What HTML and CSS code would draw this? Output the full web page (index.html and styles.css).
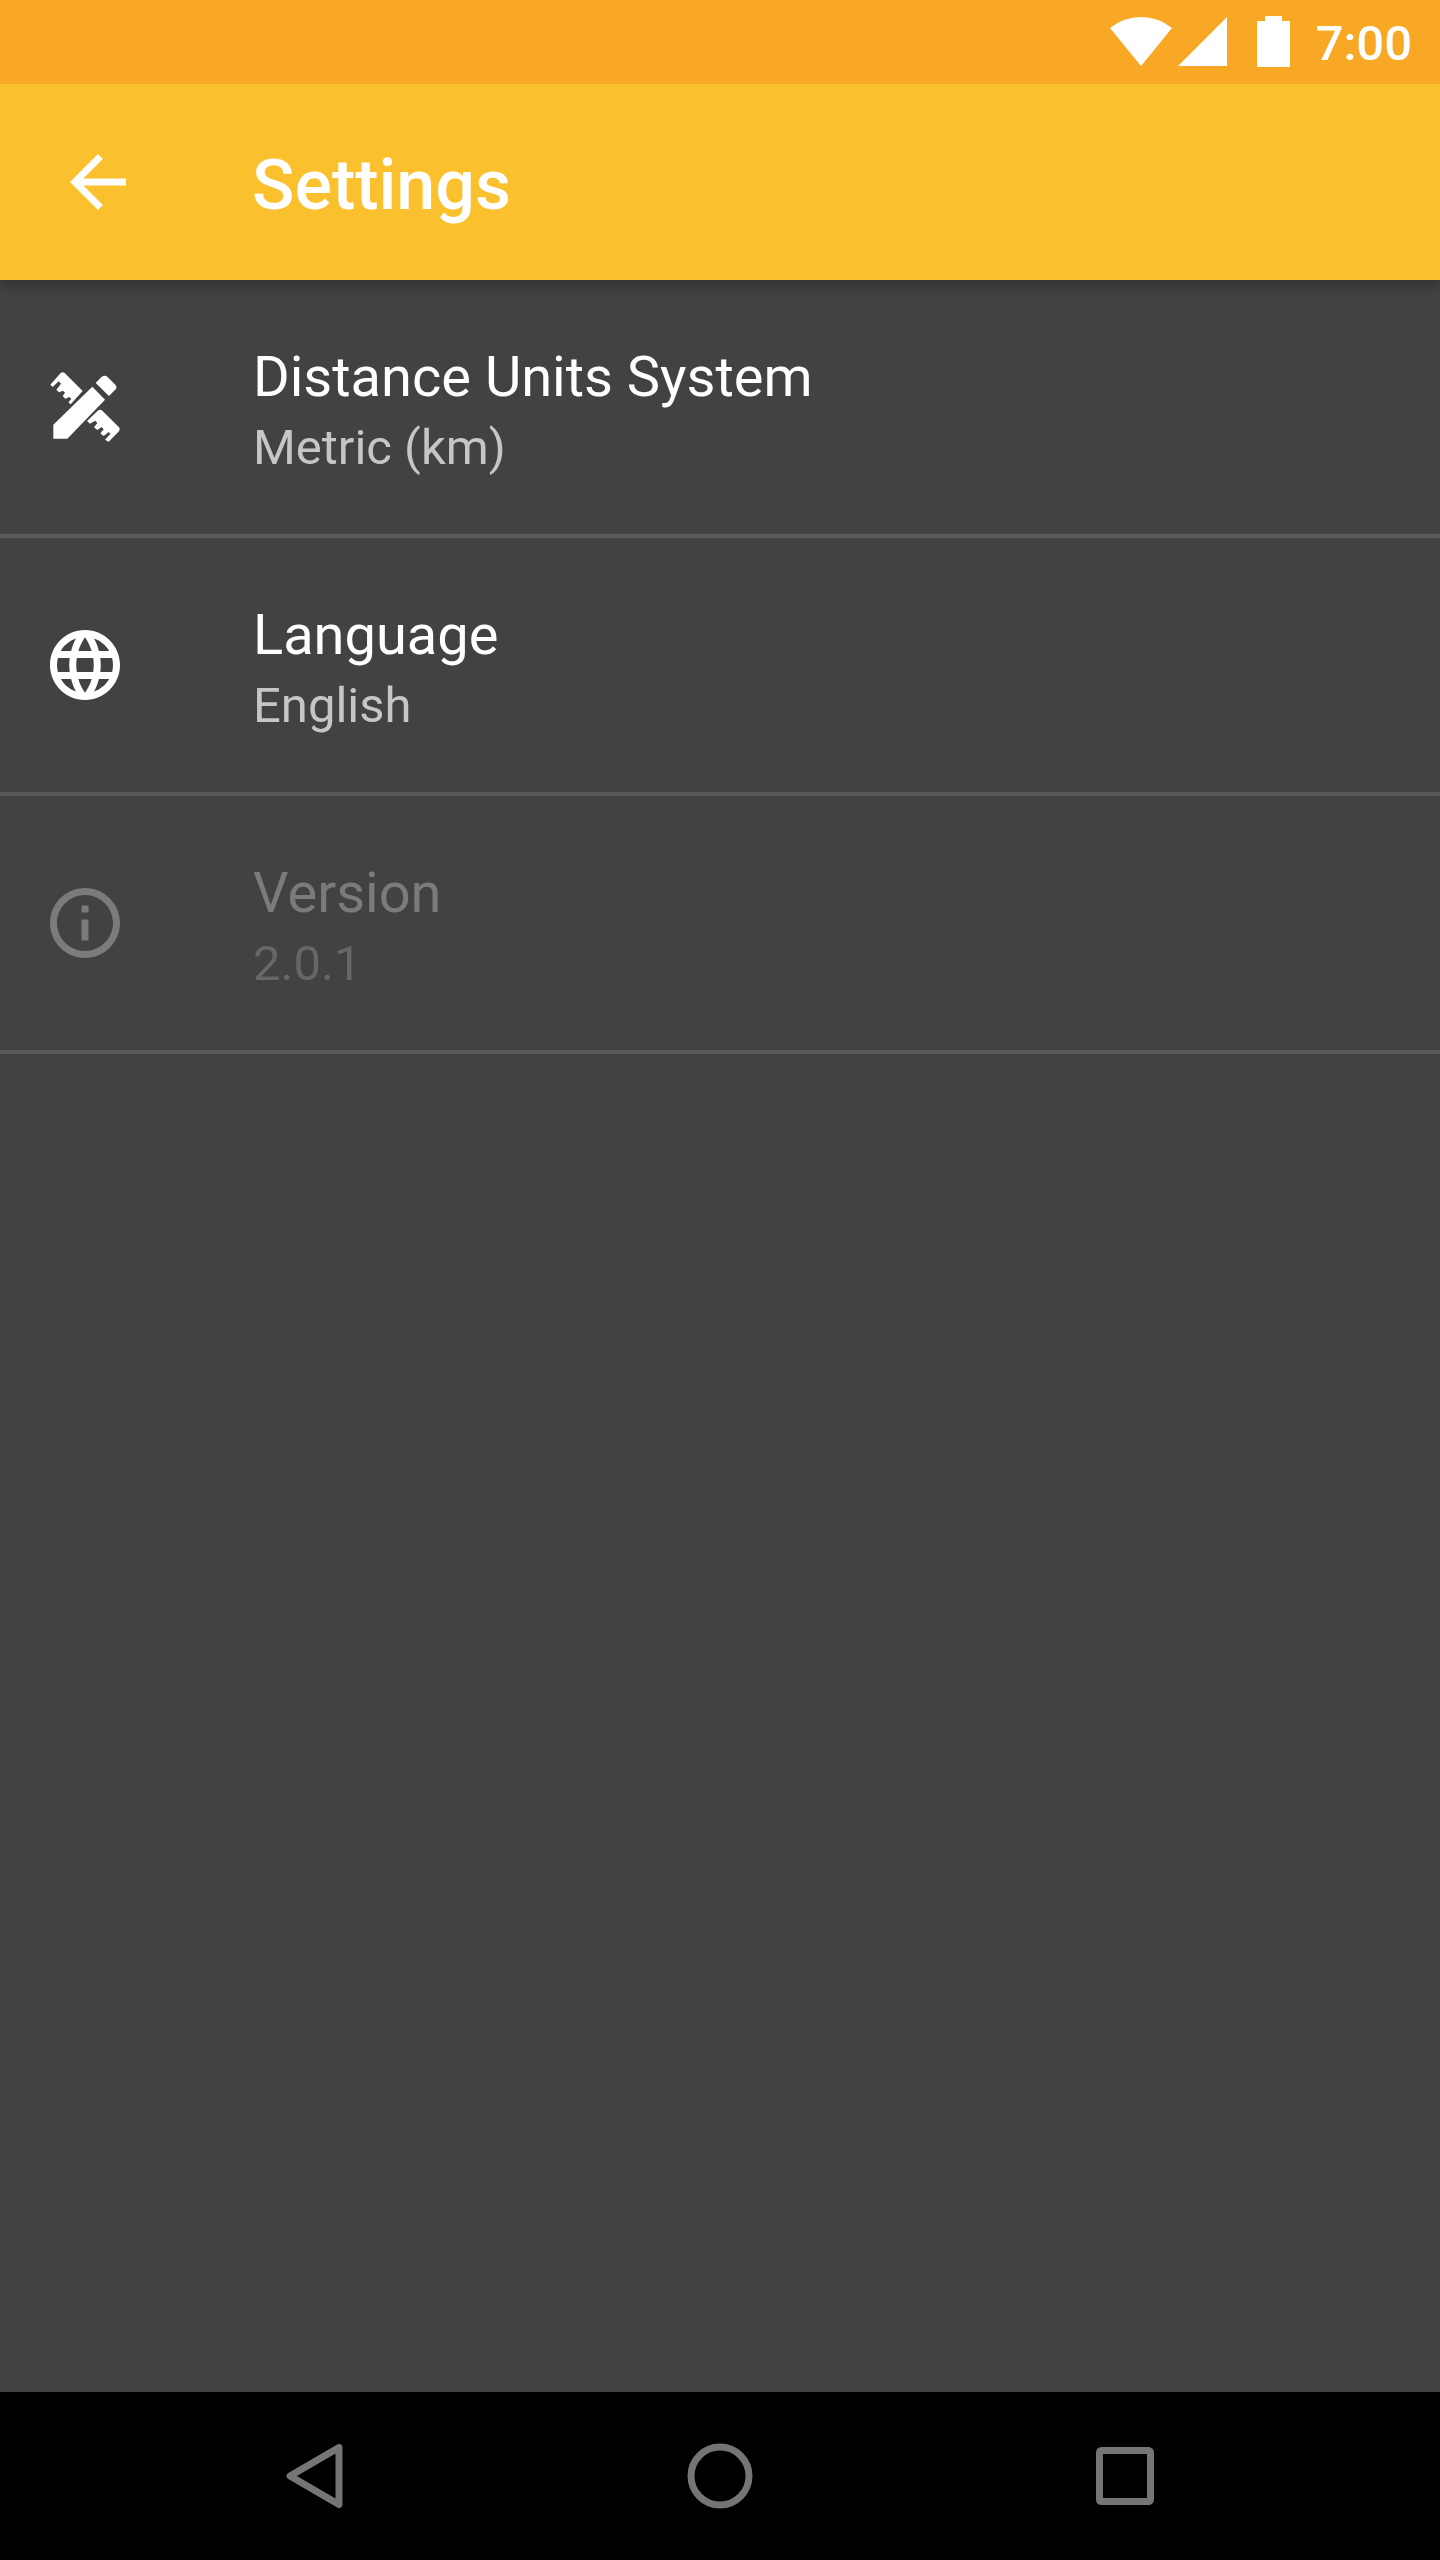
FILE: index.html
```html
<!DOCTYPE html>
<html lang="en">
<head>
<meta charset="utf-8">
<meta name="viewport" content="width=device-width, initial-scale=1">
<title>Settings</title>
<link rel="stylesheet" href="styles.css">
</head>
<body>
<div class="status-bar">
  <svg class="signal" viewBox="0 0 180 52" aria-hidden="true">
    <path d="M0 12Q14 1 31 1T62 12L31 50Z"/>
    <path d="M68 50L117 1V50Z"/>
    <path d="M147 5h8V0h17v5h8v46h-33Z"/>
  </svg>
  <time class="clock">7:00</time>
</div>
<header class="app-bar">
  <button class="back" type="button" aria-label="Back">
    <svg class="icon" viewBox="0 0 24 24" aria-hidden="true"><path d="M20 11H7.83l5.59-5.59L12 4l-8 8 8 8 1.41-1.41L7.83 13H20v-2z"/></svg>
  </button>
  <h1 class="title">Settings</h1>
</header>
<main class="content">
  <ul class="settings">
    <li class="item">
      <button class="row" type="button">
        <svg class="icon" viewBox="39 45 252 252" aria-hidden="true">
          <path d="M61 104L92 69Q98 64 104 69L158 123L122 163L115 157L124 147L118 141L106 146L98 138L105 128L99 122L87 127L79 119L93 101L86 94L68 111Z"/>
          <path d="M171 213L205 181Q211 177 217 182L267 232Q272 238 267 244L236 275L225 269L241 252L236 246L221 258L211 250L221 238L215 231L202 240L192 232L202 219L195 212L180 221Z"/>
          <path d="M70 224L187 110L225 149L112 266H70Z"/>
          <path d="M197 99L215 80Q224 74 232 80L256 104Q262 112 257 118L237 138Z"/>
        </svg>
        <span class="text"><span class="label">Distance Units System</span><span class="value">Metric (km)</span></span>
      </button>
    </li>
    <li class="item">
      <button class="row" type="button">
        <svg class="icon" viewBox="0 0 24 24" aria-hidden="true"><path d="M11.99 2C6.47 2 2 6.48 2 12s4.47 10 9.99 10C17.52 22 22 17.52 22 12S17.52 2 11.99 2zm6.93 6h-2.95c-.32-1.25-.78-2.45-1.38-3.56 1.84.63 3.37 1.91 4.33 3.56zM12 4.04c.83 1.2 1.48 2.53 1.91 3.96h-3.82c.43-1.43 1.08-2.76 1.91-3.96zM4.26 14C4.1 13.36 4 12.69 4 12s.1-1.36.26-2h3.38c-.08.66-.14 1.32-.14 2s.06 1.34.14 2H4.26zm.82 2h2.95c.32 1.25.78 2.45 1.38 3.56-1.84-.63-3.37-1.9-4.33-3.56zm2.95-8H5.08c.96-1.66 2.49-2.93 4.33-3.56C8.81 5.55 8.35 6.75 8.03 8zM12 19.96c-.83-1.2-1.48-2.53-1.91-3.96h3.82c-.43 1.43-1.08 2.76-1.91 3.96zM14.34 14H9.66c-.09-.66-.16-1.32-.16-2s.07-1.35.16-2h4.68c.09.65.16 1.32.16 2s-.07 1.34-.16 2zm.25 5.56c.6-1.11 1.06-2.31 1.38-3.56h2.95c-.96 1.65-2.49 2.93-4.33 3.56zM16.36 14c.08-.66.14-1.32.14-2s-.06-1.34-.14-2h3.38c.16.64.26 1.31.26 2s-.1 1.36-.26 2h-3.38z"/></svg>
        <span class="text"><span class="label">Language</span><span class="value">English</span></span>
      </button>
    </li>
    <li class="item">
      <button class="row" type="button" disabled>
        <svg class="icon" viewBox="0 0 24 24" aria-hidden="true"><path d="M11 17h2v-6h-2v6zm1-15C6.48 2 2 6.48 2 12s4.48 10 10 10 10-4.48 10-10S17.52 2 12 2zm0 18c-4.41 0-8-3.59-8-8s3.59-8 8-8 8 3.59 8 8-3.59 8-8 8zM11 9h2V7h-2v2z"/></svg>
        <span class="text"><span class="label">Version</span><span class="value">2.0.1</span></span>
      </button>
    </li>
  </ul>
</main>
<nav class="nav-bar" aria-label="System">
  <button class="nav-key" type="button" aria-label="Back"><svg class="key-icon" viewBox="0 0 66 66" aria-hidden="true"><path d="M57 4.500L8 33L57 61.500Z"/></svg></button>
  <button class="nav-key" type="button" aria-label="Home"><svg class="key-icon" viewBox="0 0 66 66" aria-hidden="true"><circle cx="33" cy="33" r="29"/></svg></button>
  <button class="nav-key" type="button" aria-label="Recent apps"><svg class="key-icon" viewBox="0 0 66 66" aria-hidden="true"><rect x="7.500" y="7.500" width="51" height="51" rx="2"/></svg></button>
</nav>
</body>
</html>
```
FILE: styles.css
```css
* {
  box-sizing: border-box;
}

body {
  display: flex;
  flex-direction: column;
  min-height: 100vh;
  margin: 0;
  background: #424242;
  color: #fff;
  font-family: Roboto, sans-serif;
}

button {
  padding: 0;
  border: 0;
  background: none;
  color: inherit;
  font: inherit;
  text-align: left;
}

svg {
  display: block;
  flex: none;
  fill: currentColor;
}

.status-bar {
  position: relative;
  display: flex;
  align-items: center;
  justify-content: flex-end;
  gap: 26px;
  height: 84px;
  padding-right: 28px;
  background: #f9a825;
}

.signal {
  width: 180px;
  height: 52px;
}

.clock {
  padding-top: 4px;
  font-size: 49px;
  font-weight: 500;
  line-height: 58px;
}

.app-bar {
  display: flex;
  align-items: center;
  gap: 112px;
  height: 196px;
  padding: 0 56px;
  background: #fbc02d;
  box-shadow: 0 4px 14px rgba(0, 0, 0, 0.3);
}

.icon {
  width: 84px;
  height: 84px;
}

.title {
  margin: 0;
  padding-top: 6px;
  font-size: 70px;
  font-weight: 500;
  line-height: 84px;
}

.content {
  flex: 1;
}

.settings {
  margin: 0;
  padding: 0;
  list-style: none;
}

.item {
  border-bottom: 4px solid #595959;
}

.row {
  display: flex;
  align-items: center;
  gap: 126px;
  width: 100%;
  min-height: 254px;
  padding: 0 43px;
}

.text {
  display: flex;
  flex-direction: column;
  padding-bottom: 8px;
  padding-top: 18px;
}

.label {
  font-size: 56px;
  line-height: 72px;
}

.value {
  color: #c6c6c6;
  font-size: 49px;
  line-height: 70px;
}

.row:disabled {
  color: #7b7b7b;
}

.row:disabled .value {
  color: #676767;
}

.nav-bar {
  display: flex;
  height: 168px;
  padding: 0 112px;
  background: #000;
  color: #757575;
}

.nav-key {
  display: flex;
  flex: 1;
  align-items: center;
  justify-content: center;
}

.key-icon {
  width: 66px;
  height: 66px;
  fill: none;
  stroke: currentColor;
  stroke-width: 7;
  stroke-linejoin: round;
}
```
